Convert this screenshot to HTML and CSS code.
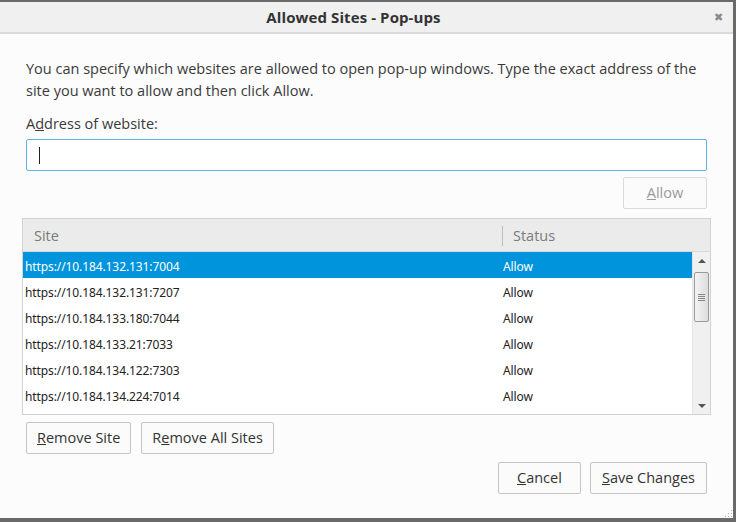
FILE: index.html
```html
<!DOCTYPE html>
<html>
<head>
<meta charset="utf-8">
<link rel="stylesheet" href="styles.css">
</head>
<body>
<div class="frame">
  <div class="dialog">
    <div class="titlebar">
      <span class="title">Allowed Sites - Pop-ups</span>
      <span class="close">&#x2716;</span>
    </div>
    <div class="content">
      <p class="desc">You can specify which websites are allowed to open pop-up windows. Type the exact address of the<br>site you want to allow and then click Allow.</p>
      <label class="label">A<u>d</u>dress of website:</label>
      <div class="input"><span class="caret"></span></div>
      <div class="allow-row"><button class="btn disabled"><u>A</u>llow</button></div>
      <div class="tree">
        <div class="tree-head">
          <div class="col-site">Site</div>
          <div class="col-sep"></div>
          <div class="col-status">Status</div>
        </div>
        <div class="tree-body">
          <div class="rows">
            <div class="row selected"><span class="c-site">https://10.184.132.131:7004</span><span class="c-status">Allow</span></div>
            <div class="row"><span class="c-site">https://10.184.132.131:7207</span><span class="c-status">Allow</span></div>
            <div class="row"><span class="c-site">https://10.184.133.180:7044</span><span class="c-status">Allow</span></div>
            <div class="row"><span class="c-site">https://10.184.133.21:7033</span><span class="c-status">Allow</span></div>
            <div class="row"><span class="c-site">https://10.184.134.122:7303</span><span class="c-status">Allow</span></div>
            <div class="row"><span class="c-site">https://10.184.134.224:7014</span><span class="c-status">Allow</span></div>
          </div>
          <div class="scrollbar">
            <div class="arrow up"></div>
            <div class="track">
              <div class="thumb"><span class="grip"></span></div>
            </div>
            <div class="arrow down"></div>
          </div>
        </div>
      </div>
      <div class="remove-row">
        <button class="btn"><u>R</u>emove Site</button>
        <button class="btn">R<u>e</u>move All Sites</button>
      </div>
      <div class="footer">
        <button class="btn"><u>C</u>ancel</button>
        <button class="btn"><u>S</u>ave Changes</button>
      </div>
    </div>
    <div class="grip-corner"></div>
  </div>
</div>
</body>
</html>
```
FILE: styles.css
```css
* { box-sizing: border-box; }
html, body { margin: 0; padding: 0; }
body {
  width: 736px;
  height: 522px;
  overflow: hidden;
  background: #6a6a6a;
  font-family: "Open Sans", "Noto Sans", sans-serif;
  color: #333;
}
.frame {
  width: 736px;
  height: 522px;
  padding: 2px 3px 4px 0;
  background: #6a6a6a;
}
.dialog {
  position: relative;
  width: 100%;
  height: 100%;
  background: #fcfcfc;
  display: flex;
  flex-direction: column;
}
.titlebar {
  height: 32px;
  flex: none;
  background: #f0f0f0;
  border-bottom: 2px solid #dadada;
  display: flex;
  align-items: center;
  justify-content: center;
  position: relative;
}
.title {
  font-weight: 700;
  font-size: 15px;
  color: #333;
  margin-right: 26px;
  margin-top: -1px;
  letter-spacing: 0.1px;
}
.close {
  position: absolute;
  right: 10px;
  top: 7px;
  font-size: 11px;
  color: #8a8a8a;
}
.content {
  padding: 24px 26px 0 26px;
  display: flex;
  flex-direction: column;
}
.desc {
  margin: 0;
  font-size: 14.5px;
  line-height: 22px;
  color: #3a3a3a;
}
.label {
  display: block;
  margin-top: 11px;
  font-size: 14.5px;
  line-height: 22px;
  color: #3a3a3a;
}
.input {
  margin-top: 4px;
  height: 32px;
  border: 1px solid #5eb3ea;
  border-radius: 2px;
  background: #fff;
  display: flex;
  align-items: center;
  padding-left: 12px;
}
.caret {
  width: 1px;
  height: 17px;
  background: #222;
}
.allow-row {
  display: flex;
  justify-content: flex-end;
  margin-top: 6px;
}
.btn {
  font-family: "Open Sans", "Noto Sans", sans-serif;
  font-size: 14.5px;
  color: #333;
  background: #fbfbfb;
  border: 1px solid #c4c4c4;
  border-radius: 2px;
  height: 32px;
  padding: 0 11px;
  line-height: 1;
}
.btn.disabled {
  color: #9a9a9a;
  border-color: #dadada;
  width: 84px;
}
.tree {
  margin: 9px -4px 0 -4px;
  border: 1px solid #d2d2d2;
  background: #fff;
  height: 197px;
  display: flex;
  flex-direction: column;
}
.tree-head {
  height: 33px;
  flex: none;
  background: #ebebeb;
  border-bottom: 1px solid #d8d8d8;
  display: flex;
  align-items: center;
  font-size: 14.5px;
  color: #7a7a7a;
  padding-top: 1px;
}
.col-site { width: 479px; padding-left: 11px; }
.col-sep { width: 1px; height: 20px; background: #bdbdbd; }
.col-status { padding-left: 10px; }
.tree-body {
  flex: 1;
  display: flex;
  overflow: hidden;
}
.rows { flex: 1; overflow: hidden; }
.row {
  height: 26px;
  display: flex;
  align-items: center;
  padding-top: 2px;
  font-family: "Noto Sans", sans-serif;
  font-size: 12px;
  color: #222;
  letter-spacing: -0.1px;
}
.row.selected { background: #0094dc; color: #fff; }
.c-site { width: 480px; padding-left: 2px; }
.c-status { padding-left: 0; }
.scrollbar {
  width: 18px;
  flex: none;
  background: #f0f0f0;
  border-left: 1px solid #e4e4e4;
  display: flex;
  flex-direction: column;
}
.arrow {
  height: 17px;
  flex: none;
  display: flex;
  align-items: center;
  justify-content: center;
}
.arrow.up::before {
  content: "";
  border-left: 4px solid transparent;
  border-right: 4px solid transparent;
  border-bottom: 4px solid #555;
}
.arrow.down::before {
  content: "";
  border-left: 4px solid transparent;
  border-right: 4px solid transparent;
  border-top: 4px solid #555;
}
.track { flex: 1; padding: 3px 1px 0 1px; }
.thumb {
  height: 50px;
  border: 1px solid #9a9a9a;
  border-radius: 2px;
  background: linear-gradient(to right, #f4f4f4, #dcdcdc);
  display: flex;
  align-items: center;
  justify-content: center;
}
.grip {
  width: 7px;
  height: 7px;
  background: repeating-linear-gradient(to bottom, #888 0 1px, transparent 1px 2px);
}
.remove-row {
  display: flex;
  gap: 10px;
  margin-top: 7px;
}
.remove-row .btn { padding: 0 10px; }
.footer {
  display: flex;
  justify-content: flex-end;
  gap: 9px;
  margin-top: 8px;
}
.footer .btn:first-child { width: 83px; }
.grip-corner {
  position: absolute;
  right: 1px;
  bottom: 1px;
  width: 8px;
  height: 8px;
  background:
    radial-gradient(circle, #aaa 0.8px, transparent 1px) 0 0 / 3px 3px;
  clip-path: polygon(100% 0, 100% 100%, 0 100%);
}
```
